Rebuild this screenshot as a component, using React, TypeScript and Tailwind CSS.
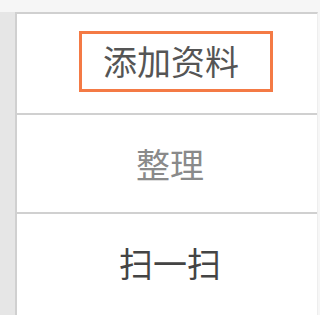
const rows = [
  { label: "添加资料", color: "text-[#555555]", active: true },
  { label: "整理", color: "text-[#8a8a8a]", active: false },
  { label: "扫一扫", color: "text-[#444444]", active: false },
];

export default function App() {
  return (
    <div
      className="w-[320px] h-[315px] overflow-hidden bg-[#f6f6f6] flex flex-col"
      style={{ fontFamily: '"Noto Sans CJK SC", "Noto Sans", sans-serif' }}
    >
      <div className="h-[12px] shrink-0" />
      <div className="flex flex-1 min-h-0">
        <div className="w-[15px] shrink-0 bg-[#e6e6e6]" />
        {/* menu panel */}
        <div className="flex-1 flex flex-col bg-white border-l-2 border-t-2 border-r border-[#d0d0d0] border-r-[#eeeeee] mr-[2px]">
          {rows.map((row, i) => (
            <div
              key={row.label}
              className={`h-[99px] shrink-0 flex items-center justify-center pl-[6px] ${
                i > 0 ? "border-t-2 border-[#d0d0d0]" : ""
              }`}
            >
              {row.active ? (
                <div className="w-[194px] h-[61px] border-[3px] border-[#f47a45] flex items-center pl-[21px] ml-[12px] -mt-[5px]">
                  <span className={`text-[34px] leading-none ${row.color}`}>{row.label}</span>
                </div>
              ) : (
                <span className={`text-[34px] leading-none ${row.color}`}>{row.label}</span>
              )}
            </div>
          ))}
        </div>
      </div>
    </div>
  );
}
